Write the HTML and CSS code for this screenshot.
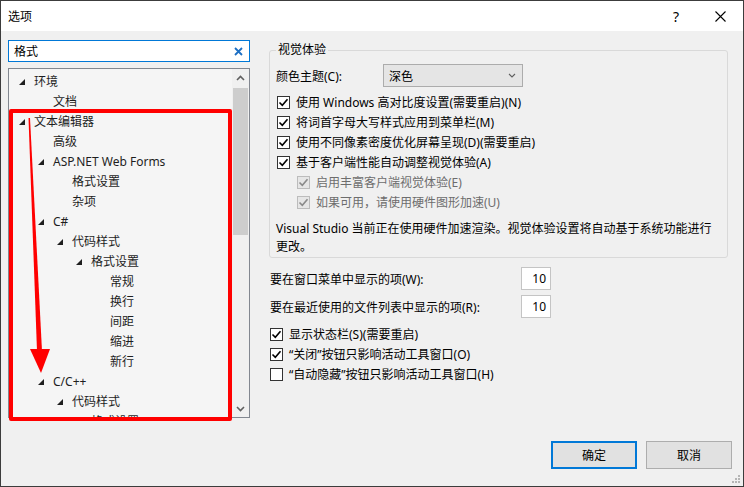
FILE: index.html
```html
<!DOCTYPE html>
<html lang="zh-CN">
<head>
    <meta charset="UTF-8">
    <title>选项</title>
    <link rel="stylesheet" href="styles.css">
</head>
<body>
    <div class="dialog">
        <div class="titlebar">
            <span class="title">选项</span>
            <span class="tb-btn help">?</span>
            <span class="tb-btn">
                <svg width="11" height="11" viewBox="0 0 11 11"><path d="M0.5 0.5 L10.5 10.5 M10.5 0.5 L0.5 10.5" stroke="#000" stroke-width="1.1" fill="none"/></svg>
            </span>
        </div>

        <div class="content">
            <div class="nav">
                <div class="search">
                    <span class="search-text">格式</span>
                    <svg class="clear" width="9" height="9" viewBox="0 0 9 9"><path d="M1 1 L8 8 M8 1 L1 8" stroke="#1c6fc4" stroke-width="1.8" fill="none"/></svg>
                </div>

                <div class="tree">
                    <div class="tree-items">
                        <div class="node lv0"><span class="exp"><i></i></span>环境</div>
                        <div class="node lv1"><span class="exp"></span>文档</div>
                        <div class="node lv0"><span class="exp"><i></i></span>文本编辑器</div>
                        <div class="node lv1"><span class="exp"></span>高级</div>
                        <div class="node lv1"><span class="exp"><i></i></span>ASP.NET Web Forms</div>
                        <div class="node lv2"><span class="exp"></span>格式设置</div>
                        <div class="node lv2"><span class="exp"></span>杂项</div>
                        <div class="node lv1"><span class="exp"><i></i></span>C#</div>
                        <div class="node lv2"><span class="exp"><i></i></span>代码样式</div>
                        <div class="node lv3"><span class="exp"><i></i></span>格式设置</div>
                        <div class="node lv4"><span class="exp"></span>常规</div>
                        <div class="node lv4"><span class="exp"></span>换行</div>
                        <div class="node lv4"><span class="exp"></span>间距</div>
                        <div class="node lv4"><span class="exp"></span>缩进</div>
                        <div class="node lv4"><span class="exp"></span>新行</div>
                        <div class="node lv1"><span class="exp"><i></i></span>C/C++</div>
                        <div class="node lv2"><span class="exp"><i></i></span>代码样式</div>
                        <div class="node lv3"><span class="exp"><i></i></span>格式设置</div>
                    </div>
                    <div class="scrollbar">
                        <div class="sb-arrow">
                            <svg width="9" height="6" viewBox="0 0 9 6"><path d="M1 5 L4.5 1.5 L8 5" stroke="#606060" stroke-width="1.6" fill="none"/></svg>
                        </div>
                        <div class="sb-thumb"></div>
                        <div class="sb-space"></div>
                        <div class="sb-arrow">
                            <svg width="9" height="6" viewBox="0 0 9 6"><path d="M1 1 L4.5 4.5 L8 1" stroke="#606060" stroke-width="1.6" fill="none"/></svg>
                        </div>
                    </div>

                    <!-- annotation drawn on top of the screenshot -->
                    <div class="mark-box"></div>
                    <svg class="mark-arrow" width="60" height="320" viewBox="0 0 60 320">
                        <polygon points="20.5,50 22,50 34,283 29,283" fill="#ff0000"/>
                        <polygon points="22,281 42,281 33,305" fill="#ff0000"/>
                    </svg>
                </div>
            </div>

            <div class="options">
                <div class="group">
                    <span class="group-title">视觉体验</span>
                    <div class="field">
                        <span class="field-label">颜色主题(C):</span>
                        <div class="select">
                            <span>深色</span>
                            <svg width="8" height="5" viewBox="0 0 8 5"><path d="M1 1 L4 4 L7 1" stroke="#606060" stroke-width="1.1" fill="none"/></svg>
                        </div>
                    </div>
                    <div class="checks">
                        <div class="check"><span class="box on"><svg width="11" height="11" viewBox="0 0 11 11"><path d="M1.5 5.5 L4.3 8.3 L9.5 2.2" stroke="#000" stroke-width="1.6" fill="none"/></svg></span>使用 Windows 高对比度设置(需要重启)(N)</div>
                        <div class="check"><span class="box on"><svg width="11" height="11" viewBox="0 0 11 11"><path d="M1.5 5.5 L4.3 8.3 L9.5 2.2" stroke="#000" stroke-width="1.6" fill="none"/></svg></span>将词首字母大写样式应用到菜单栏(M)</div>
                        <div class="check"><span class="box on"><svg width="11" height="11" viewBox="0 0 11 11"><path d="M1.5 5.5 L4.3 8.3 L9.5 2.2" stroke="#000" stroke-width="1.6" fill="none"/></svg></span>使用不同像素密度优化屏幕呈现(D)(需要重启)</div>
                        <div class="check"><span class="box on"><svg width="11" height="11" viewBox="0 0 11 11"><path d="M1.5 5.5 L4.3 8.3 L9.5 2.2" stroke="#000" stroke-width="1.6" fill="none"/></svg></span>基于客户端性能自动调整视觉体验(A)</div>
                        <div class="check sub disabled"><span class="box on"><svg width="11" height="11" viewBox="0 0 11 11"><path d="M1.5 5.5 L4.3 8.3 L9.5 2.2" stroke="#8a8a8a" stroke-width="1.6" fill="none"/></svg></span>启用丰富客户端视觉体验(E)</div>
                        <div class="check sub disabled"><span class="box on"><svg width="11" height="11" viewBox="0 0 11 11"><path d="M1.5 5.5 L4.3 8.3 L9.5 2.2" stroke="#8a8a8a" stroke-width="1.6" fill="none"/></svg></span>如果可用，请使用硬件图形加速(U)</div>
                    </div>
                    <p class="note">Visual Studio 当前正在使用硬件加速渲染。视觉体验设置将自动基于系统功能进行更改。</p>
                </div>

                <div class="num-row">
                    <span class="num-label">要在窗口菜单中显示的项(W):</span>
                    <span class="num-box">10</span>
                </div>
                <div class="num-row second">
                    <span class="num-label">要在最近使用的文件列表中显示的项(R):</span>
                    <span class="num-box">10</span>
                </div>

                <div class="checks bottom">
                    <div class="check"><span class="box on"><svg width="11" height="11" viewBox="0 0 11 11"><path d="M1.5 5.5 L4.3 8.3 L9.5 2.2" stroke="#000" stroke-width="1.6" fill="none"/></svg></span>显示状态栏(S)(需要重启)</div>
                    <div class="check"><span class="box on"><svg width="11" height="11" viewBox="0 0 11 11"><path d="M1.5 5.5 L4.3 8.3 L9.5 2.2" stroke="#000" stroke-width="1.6" fill="none"/></svg></span>“关闭”按钮只影响活动工具窗口(O)</div>
                    <div class="check"><span class="box"></span>“自动隐藏”按钮只影响活动工具窗口(H)</div>
                </div>
            </div>
        </div>

        <div class="footer">
            <button class="btn primary">确定</button>
            <button class="btn">取消</button>
        </div>

        <svg class="grip" width="9" height="9" viewBox="0 0 9 9">
            <rect x="6" y="0" width="2" height="2" fill="#b5b5b5"/>
            <rect x="3" y="3" width="2" height="2" fill="#b5b5b5"/>
            <rect x="6" y="3" width="2" height="2" fill="#b5b5b5"/>
            <rect x="0" y="6" width="2" height="2" fill="#b5b5b5"/>
            <rect x="3" y="6" width="2" height="2" fill="#b5b5b5"/>
            <rect x="6" y="6" width="2" height="2" fill="#b5b5b5"/>
        </svg>
    </div>
</body>
</html>
```

FILE: styles.css
```css
* {
    margin: 0;
    padding: 0;
    box-sizing: border-box;
}

body {
    font-family: "Noto Sans", "Noto Sans CJK SC", sans-serif;
    font-size: 12px;
    color: #000;
    background: #fff;
}

.dialog {
    position: relative;
    width: 744px;
    height: 487px;
    border: 1px solid #3c3c3c;
    background: #f0f0f0;
    display: flex;
    flex-direction: column;
}

/* title bar */
.titlebar {
    height: 30px;
    background: #fff;
    display: flex;
    align-items: center;
    padding-left: 7px;
    padding-right: 1px;
}

.title {
    flex: 1;
}

.tb-btn {
    width: 44px;
    height: 30px;
    display: flex;
    align-items: center;
    justify-content: center;
}

.help {
    font-size: 14px;
}

/* main area */
.content {
    display: flex;
    height: 388px;
}

.nav {
    width: 242px;
    margin-left: 7px;
    padding-top: 9px;
}

.search {
    height: 22px;
    background: #fff;
    border: 1px solid #0078d7;
    display: flex;
    align-items: center;
    padding-left: 5px;
    padding-right: 6px;
}

.search-text {
    flex: 1;
}

.tree {
    position: relative;
    margin-top: 6px;
    height: 350px;
    border: 1px solid #828790;
    background: #f5f5f5;
    display: flex;
}

.tree-items {
    flex: 1;
    overflow: hidden;
    padding-top: 2px;
    color: #1e1e1e;
}

.node {
    height: 20px;
    display: flex;
    align-items: center;
    white-space: nowrap;
}

.lv0 { padding-left: 10px; }
.lv1 { padding-left: 29px; }
.lv2 { padding-left: 48px; }
.lv3 { padding-left: 67px; }
.lv4 { padding-left: 86px; }

.exp {
    width: 15px;
    flex: none;
    display: flex;
    align-items: center;
}

.exp i {
    width: 0;
    height: 0;
    margin-top: 2px;
    border-left: 6px solid transparent;
    border-bottom: 6px solid #1e1e1e;
}

.scrollbar {
    width: 17px;
    background: #f0f0f0;
    display: flex;
    flex-direction: column;
}

.sb-arrow {
    height: 17px;
    display: flex;
    align-items: center;
    justify-content: center;
}

.sb-thumb {
    margin: 2px 1px 0;
    height: 147px;
    background: #cdcdcd;
}

.sb-space {
    flex: 1;
}

.mark-box {
    position: absolute;
    left: 0;
    top: 40px;
    width: 223px;
    height: 312px;
    border: 4px solid #ff0000;
    border-radius: 2px;
}

.mark-arrow {
    position: absolute;
    left: -1px;
    top: -1px;
}

/* right side */
.options {
    width: 459px;
    margin-left: 19px;
    padding-top: 19px;
}

.group {
    position: relative;
    border: 1px solid #d9d9d9;
    border-radius: 3px;
    padding: 13px 6px 1px 6px;
}

.group-title {
    position: absolute;
    left: 6px;
    top: -10px;
    padding: 0 2px;
    background: #f0f0f0;
    line-height: 18px;
}

.field {
    display: flex;
    align-items: center;
    height: 23px;
}

.field-label {
    width: 107px;
}

.select {
    width: 140px;
    height: 23px;
    border: 1px solid #acacac;
    background: #e5e5e5;
    display: flex;
    align-items: center;
    justify-content: space-between;
    padding: 0 6px 0 5px;
}

.checks {
    margin-top: 5px;
}

.check {
    height: 20px;
    display: flex;
    align-items: center;
    padding-left: 1px;
    white-space: nowrap;
}

.check.sub {
    padding-left: 21px;
}

.check.disabled {
    color: #6d6d6d;
}

.box {
    width: 13px;
    height: 13px;
    margin-right: 6px;
    border: 1px solid #333;
    background: #fff;
    display: flex;
    align-items: center;
    justify-content: center;
    flex: none;
}

.disabled .box {
    border-color: #bcbcbc;
    background: #e6e6e6;
}

.note {
    margin-top: 8px;
    line-height: 18px;
}

.num-row {
    margin-top: 9px;
    display: flex;
    align-items: center;
    height: 23px;
    padding-left: 1px;
}

.num-row.second {
    margin-top: 5px;
}

.num-label {
    width: 251px;
}

.num-box {
    width: 30px;
    height: 23px;
    background: #fff;
    border: 1px solid #c4c4c4;
    display: flex;
    align-items: center;
    justify-content: flex-end;
    padding-right: 4px;
}

.checks.bottom {
    margin-top: 6px;
}

/* buttons */
.footer {
    margin-top: auto;
    display: flex;
    justify-content: flex-end;
    gap: 9px;
    padding: 0 11px 17px 0;
}

.btn {
    width: 86px;
    height: 28px;
    background: #e1e1e1;
    border: 1px solid #adadad;
    font-family: inherit;
    font-size: 12px;
    color: #000;
}

.btn.primary {
    border: 2px solid #0078d7;
}

.grip {
    position: absolute;
    right: 2px;
    bottom: 2px;
}
```
